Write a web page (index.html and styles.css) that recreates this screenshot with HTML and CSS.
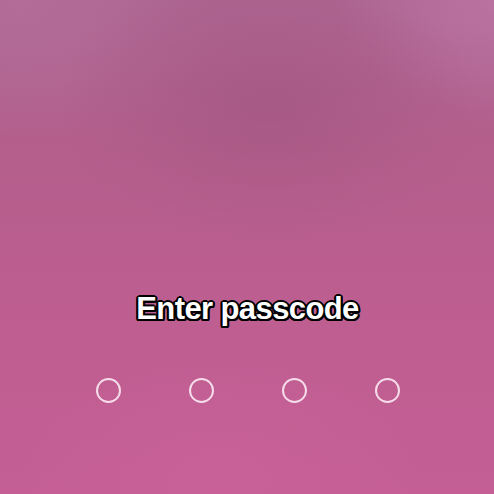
FILE: index.html
```html
<!DOCTYPE html>
<html lang="en">
<head>
<meta charset="utf-8">
<title>Enter passcode</title>
<link rel="stylesheet" href="styles.css">
</head>
<body>
<main class="screen">
  <h1 class="title">Enter passcode</h1>
  <div class="dots">
    <span class="dot"></span>
    <span class="dot"></span>
    <span class="dot"></span>
    <span class="dot"></span>
  </div>
</main>
</body>
</html>
```

FILE: styles.css
```css
html, body {
  margin: 0;
  padding: 0;
  width: 494px;
  height: 494px;
  overflow: hidden;
}

.screen {
  width: 494px;
  height: 494px;
  box-sizing: border-box;
  padding-top: 290px;
  padding-left: 1px;
  display: flex;
  flex-direction: column;
  align-items: center;
  background:
    radial-gradient(ellipse 210px 140px at 270px 105px, rgba(160, 85, 128, 0.6), rgba(160, 85, 128, 0) 100%),
    radial-gradient(ellipse 160px 120px at 494px 0px, rgba(190, 120, 168, 0.75), rgba(190, 120, 168, 0) 100%),
    radial-gradient(ellipse 200px 130px at 20px 10px, rgba(180, 112, 155, 0.65), rgba(180, 112, 155, 0) 100%),
    radial-gradient(ellipse 200px 120px at 220px 480px, rgba(205, 100, 155, 0.6), rgba(205, 100, 155, 0) 100%),
    linear-gradient(180deg, #ad6590 0%, #b45f8c 30%, #bd5e90 60%, #c45e94 100%);
  font-family: "Liberation Sans", Arial, sans-serif;
}

.title {
  margin: 0;
  font-size: 31px;
  line-height: 38px;
  font-weight: 700;
  letter-spacing: -0.6px;
  color: #ffffff;
  text-shadow:
    2px 0 0 #000, -2px 0 0 #000, 0 2px 0 #000, 0 -2px 0 #000,
    1.5px 1.5px 0 #000, -1.5px 1.5px 0 #000, 1.5px -1.5px 0 #000, -1.5px -1.5px 0 #000,
    1px 2px 0 #000, -1px 2px 0 #000, 2px 1px 0 #000, -2px 1px 0 #000;
}

.dots {
  margin-top: 50px;
  display: flex;
  gap: 68px;
}

.dot {
  width: 25px;
  height: 25px;
  box-sizing: border-box;
  border: 2px solid #f6dcea;
  border-radius: 50%;
}
```
